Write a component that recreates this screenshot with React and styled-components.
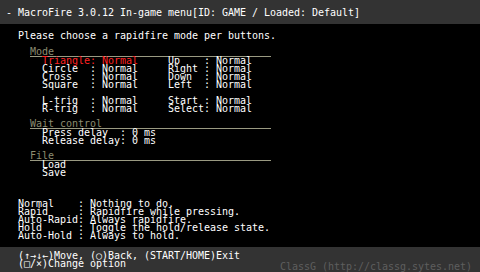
import { styled, createGlobalStyle } from "styled-components";

const CH = 6;

const GlobalStyle = createGlobalStyle`
  html, body {
    margin: 0;
    padding: 0;
    background: #000000;
  }
  body {
    font-family: "DejaVu Sans Mono", "Liberation Mono", monospace;
    font-size: 10px;
    letter-spacing: -0.02px;
    line-height: 8px;
    color: #ffffff;
  }
`;

const modeLeft = [
  ["Triangle", "Normal"],
  ["Circle", "Normal"],
  ["Cross", "Normal"],
  ["Square", "Normal"],
  null,
  ["L-trig", "Normal"],
  ["R-trig", "Normal"],
];

const modeRight = [
  ["Up", "Normal"],
  ["Right", "Normal"],
  ["Down", "Normal"],
  ["Left", "Normal"],
  null,
  ["Start", "Normal"],
  ["Select", "Normal"],
];

const help = [
  ["Normal", "Nothing to do."],
  ["Rapid", "Rapidfire while pressing."],
  ["Auto-Rapid", "Always rapidfire."],
  ["Hold", "Toggle the hold/release state."],
  ["Auto-Hold", "Always to hold."],
];

function Pair({ label, value, width, active }) {
  return (
    <Line $active={active}>
      <Label $w={width}>{label}</Label>
      <span>: </span>
      <span>{value}</span>
    </Line>
  );
}

function Section({ title, first, children }) {
  return (
    <SectionBox $first={first}>
      <Heading>{title}</Heading>
      <Items>{children}</Items>
    </SectionBox>
  );
}

function App() {
  return (
    <Screen>
      <GlobalStyle />
      <TitleBar>- MacroFire 3.0.12 In-game menu[ID: GAME / Loaded: Default]</TitleBar>
      <Content>
        <Line>Please choose a rapidfire mode per buttons.</Line>
        <Section title="Mode" first>
          <ModeGrid>
            <div>
              {modeLeft.map((r, i) =>
                r ? (
                  <Pair key={i} label={r[0]} value={r[1]} width={8} active={i === 0} />
                ) : (
                  <Line key={i} />
                )
              )}
            </div>
            <div>
              {modeRight.map((r, i) =>
                r ? <Pair key={i} label={r[0]} value={r[1]} width={6} /> : <Line key={i} />
              )}
            </div>
          </ModeGrid>
        </Section>
        <Section title="Wait control">
          <Pair label="Press delay" value="0 ms" width={13} />
          <Pair label="Release delay" value="0 ms" width={13} />
        </Section>
        <Section title="File">
          <Line>Load</Line>
          <Line>Save</Line>
        </Section>
        <Help>
          {help.map(([k, v]) => (
            <Pair key={k} label={k} value={v} width={10} />
          ))}
        </Help>
      </Content>
      <Footer>
        <Keys>
          <Line>
            (<G>↑</G><G>→</G><G>↓</G><G>←</G>)Move, (<G>○</G>)Back, (START/HOME)Exit
          </Line>
          <Line>
            (<G>□</G>/<G>×</G>)Change option
          </Line>
        </Keys>
        <Credit>ClassG (http://classg.sytes.net)</Credit>
      </Footer>
    </Screen>
  );
}

const Screen = styled.div`
  width: 480px;
  height: 272px;
  display: flex;
  flex-direction: column;
  background: #000000;
  overflow: hidden;
`;

const TitleBar = styled.div`
  height: 24px;
  box-sizing: border-box;
  padding: 9px 0 0 6px;
  background: #333333;
  white-space: pre;
`;

const Content = styled.div`
  padding: 8px 0 0 18px;
`;

const Line = styled.div`
  height: 8px;
  white-space: pre;
  color: ${(p) => (p.$active ? "#ff2020" : "#ffffff")};
`;

const Label = styled.span`
  display: inline-block;
  width: ${(p) => p.$w * CH}px;
`;

const SectionBox = styled.div`
  margin-top: ${(p) => (p.$first ? 8 : 7)}px;
  padding-left: ${2 * CH}px;
`;

const Heading = styled.div`
  width: 241px;
  height: 8px;
  color: #8c8c70;
  border-bottom: 1px solid #9a9a82;
  white-space: pre;
`;

const Items = styled.div`
  padding-left: ${2 * CH}px;
`;

const ModeGrid = styled.div`
  display: grid;
  grid-template-columns: ${21 * CH}px auto;
`;

const Help = styled.div`
  margin-top: 23px;
`;

const Footer = styled.div`
  margin-top: auto;
  height: 25px;
  box-sizing: border-box;
  display: flex;
  justify-content: space-between;
  padding: 5px 8px 0 18px;
  background: #333333;
`;

const Keys = styled.div``;

const G = styled.span`
  display: inline-block;
  width: ${CH}px;
  text-align: center;
  overflow: visible;
`;

const Credit = styled.div`
  align-self: flex-end;
  margin-bottom: 1px;
  height: 8px;
  color: #5e5e5e;
  white-space: pre;
`;

export default App;
